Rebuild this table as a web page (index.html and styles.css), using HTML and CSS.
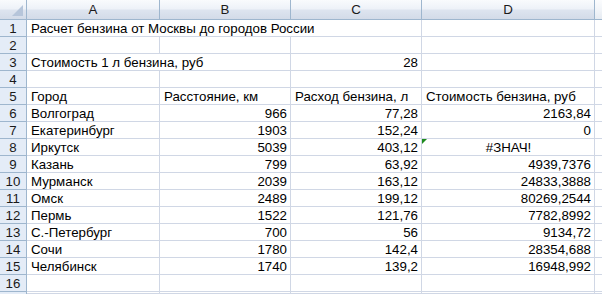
FILE: index.html
```html
<!DOCTYPE html>
<html lang="ru">
<head>
<meta charset="utf-8">
<title>Расчет бензина</title>
<link rel="stylesheet" href="styles.css">
</head>
<body>
<div class="sheet">
  <div class="corner"></div>
  <div class="colhdr">A</div>
  <div class="colhdr">B</div>
  <div class="colhdr">C</div>
  <div class="colhdr">D</div>
  <div class="colhdr last"></div>

  <div class="rowhdr">1</div>
  <div class="cell span3">Расчет бензина от Москвы до городов России</div>
  <div class="cell"></div>
  <div class="cell"></div>

  <div class="rowhdr">2</div>
  <div class="cell"></div><div class="cell"></div><div class="cell"></div><div class="cell"></div><div class="cell"></div>

  <div class="rowhdr">3</div>
  <div class="cell span2">Стоимость 1 л бензина, руб</div>
  <div class="cell num">28</div>
  <div class="cell"></div>
  <div class="cell"></div>

  <div class="rowhdr">4</div>
  <div class="cell"></div><div class="cell"></div><div class="cell"></div><div class="cell"></div><div class="cell"></div>

  <div class="rowhdr">5</div>
  <div class="cell">Город</div>
  <div class="cell">Расстояние, км</div>
  <div class="cell">Расход бензина, л</div>
  <div class="cell">Стоимость бензина, руб</div>
  <div class="cell"></div>

  <div class="rowhdr">6</div>
  <div class="cell">Волгоград</div><div class="cell num">966</div><div class="cell num">77,28</div><div class="cell num">2163,84</div><div class="cell"></div>

  <div class="rowhdr">7</div>
  <div class="cell">Екатеринбург</div><div class="cell num">1903</div><div class="cell num">152,24</div><div class="cell num">0</div><div class="cell"></div>

  <div class="rowhdr">8</div>
  <div class="cell">Иркутск</div><div class="cell num">5039</div><div class="cell num">403,12</div><div class="cell err flagged">#ЗНАЧ!</div><div class="cell"></div>

  <div class="rowhdr">9</div>
  <div class="cell">Казань</div><div class="cell num">799</div><div class="cell num">63,92</div><div class="cell num">4939,7376</div><div class="cell"></div>

  <div class="rowhdr">10</div>
  <div class="cell">Мурманск</div><div class="cell num">2039</div><div class="cell num">163,12</div><div class="cell num">24833,3888</div><div class="cell"></div>

  <div class="rowhdr">11</div>
  <div class="cell">Омск</div><div class="cell num">2489</div><div class="cell num">199,12</div><div class="cell num">80269,2544</div><div class="cell"></div>

  <div class="rowhdr">12</div>
  <div class="cell">Пермь</div><div class="cell num">1522</div><div class="cell num">121,76</div><div class="cell num">7782,8992</div><div class="cell"></div>

  <div class="rowhdr">13</div>
  <div class="cell">С.-Петербург</div><div class="cell num">700</div><div class="cell num">56</div><div class="cell num">9134,72</div><div class="cell"></div>

  <div class="rowhdr">14</div>
  <div class="cell">Сочи</div><div class="cell num">1780</div><div class="cell num">142,4</div><div class="cell num">28354,688</div><div class="cell"></div>

  <div class="rowhdr">15</div>
  <div class="cell">Челябинск</div><div class="cell num">1740</div><div class="cell num">139,2</div><div class="cell num">16948,992</div><div class="cell"></div>

  <div class="rowhdr">16</div>
  <div class="cell"></div><div class="cell"></div><div class="cell"></div><div class="cell"></div><div class="cell"></div>

  <div class="rowhdr stub"></div>
  <div class="cell"></div><div class="cell"></div><div class="cell"></div><div class="cell"></div><div class="cell"></div>
</div>
</body>
</html>
```
FILE: styles.css
```css
html, body {
  margin: 0;
  padding: 0;
  background: #ffffff;
  overflow: hidden;
}

.sheet {
  display: grid;
  grid-template-columns: 27px 133px 131px 131px 173px 8px;
  grid-template-rows: 20px repeat(16, 17px) 2px;
  font-family: "Liberation Sans", Arial, sans-serif;
  font-size: 13.3px;
  color: #000000;
  width: 603px;
  height: 294px;
  overflow: hidden;
}

.corner,
.colhdr {
  box-sizing: border-box;
  background: linear-gradient(#f9fbfd 0%, #eef2f8 45%, #dde4ef 55%, #d3dbe8 100%);
  border-right: 1px solid #9eb6ce;
  border-bottom: 1px solid #9eb6ce;
  text-align: center;
  line-height: 19px;
  color: #1a1a1a;
  overflow: hidden;
}

.corner {
  position: relative;
}

.corner::after {
  content: "";
  position: absolute;
  right: 3px;
  bottom: 3px;
  width: 0;
  height: 0;
  border-left: 11px solid transparent;
  border-bottom: 11px solid #b6c5da;
}

.colhdr.last {
  background: linear-gradient(#fbfcfe 0%, #f2f5f9 50%, #e6ebf2 100%);
  border-right: 0;
}

.rowhdr {
  box-sizing: border-box;
  background: #e4ecf7;
  border-right: 1px solid #9eb6ce;
  border-bottom: 1px solid #9eb6ce;
  text-align: center;
  line-height: 17px;
  color: #1a1a1a;
}

.rowhdr.stub {
  border-bottom: 0;
}

.cell {
  box-sizing: border-box;
  border-right: 1px solid #d0d7e5;
  border-bottom: 1px solid #d0d7e5;
  padding: 0 3px 0 4px;
  line-height: 17px;
  white-space: nowrap;
  overflow: visible;
}

.span3 {
  grid-column: span 3;
}

.span2 {
  grid-column: span 2;
}

.num {
  text-align: right;
}

.err {
  text-align: center;
}

.flagged {
  position: relative;
}

.flagged::before {
  content: "";
  position: absolute;
  left: 0;
  top: 0;
  width: 0;
  height: 0;
  border-top: 5px solid #1e8a1e;
  border-right: 5px solid transparent;
}
```
